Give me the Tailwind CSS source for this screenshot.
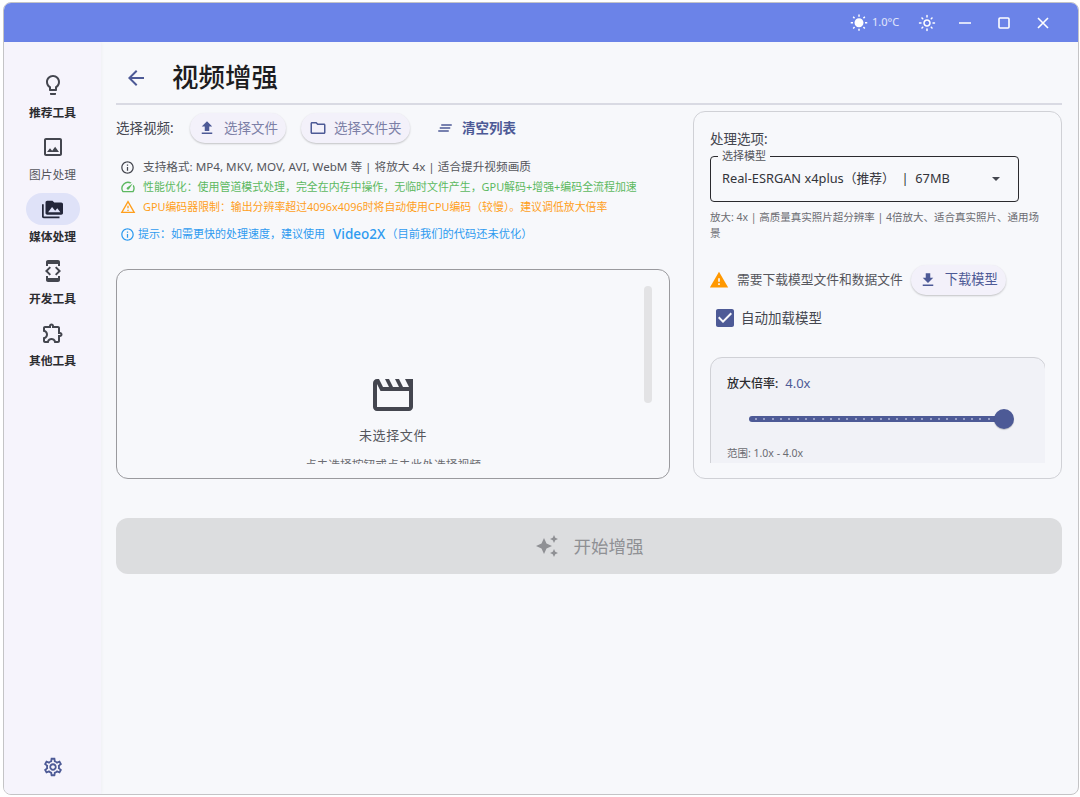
<!DOCTYPE html>
<html lang="zh-CN">
<head>
    <meta charset="UTF-8">
    <title>视频增强</title>
    <script src="https://cdn.jsdelivr.net/npm/@tailwindcss/browser@4"></script>
</head>
<body class="bg-white font-['Noto_Sans','Noto_Sans_CJK_SC',sans-serif]">
    <div class="ml-[3px] mt-[2px] w-[1076px] h-[793px] rounded-[8px] border border-[#c4c4c6] overflow-hidden flex flex-col bg-[#f7f8fb]">
        <!-- title bar -->
        <div class="h-[39px] shrink-0 bg-[#6b83e8] flex items-center justify-end text-white">
            <svg class="w-[18px] h-[18px]" viewBox="0 0 24 24" fill="currentColor"><path d="M6.76 4.84l-1.8-1.79-1.41 1.41 1.79 1.79 1.42-1.41zM4 10.5H1v2h3v-2zm9-9.95h-2V3.5h2V.55zm7.45 3.91l-1.41-1.41-1.79 1.79 1.41 1.41 1.79-1.79zm-3.21 13.7l1.79 1.8 1.41-1.41-1.8-1.79-1.4 1.4zM20 10.5v2h3v-2h-3zm-8-5c-3.31 0-6 2.69-6 6s2.69 6 6 6 6-2.69 6-6-2.69-6-6-6zm-1 16.95h2V19.5h-2v2.95zm-7.45-3.91l1.41 1.41 1.79-1.8-1.41-1.41-1.79 1.8z"/></svg>
            <span class="ml-[4px] text-[11px] text-white/80 w-[27px] whitespace-nowrap">1.0°C</span>
            <svg class="ml-[19px] w-[18px] h-[18px]" viewBox="0 0 24 24" fill="currentColor"><path d="M12 9c1.65 0 3 1.35 3 3s-1.35 3-3 3-3-1.35-3-3 1.35-3 3-3m0-2c-2.76 0-5 2.24-5 5s2.24 5 5 5 5-2.24 5-5-2.24-5-5-5zM2 13h2c.55 0 1-.45 1-1s-.45-1-1-1H2c-.55 0-1 .45-1 1s.45 1 1 1zm18 0h2c.55 0 1-.45 1-1s-.45-1-1-1h-2c-.55 0-1 .45-1 1s.45 1 1 1zM11 2v2c0 .55.45 1 1 1s1-.45 1-1V2c0-.55-.45-1-1-1s-1 .45-1 1zm0 18v2c0 .55.45 1 1 1s1-.45 1-1v-2c0-.55-.45-1-1-1s-1 .45-1 1zM5.99 4.58c-.39-.39-1.03-.39-1.41 0-.39.39-.39 1.03 0 1.41l1.06 1.06c.39.39 1.03.39 1.41 0s.39-1.03 0-1.41L5.99 4.58zm12.37 12.37c-.39-.39-1.03-.39-1.41 0-.39.39-.39 1.03 0 1.41l1.06 1.06c.39.39 1.03.39 1.41 0 .39-.39.39-1.03 0-1.41l-1.06-1.06zm1.06-10.96c.39-.39.39-1.03 0-1.41-.39-.39-1.03-.39-1.41 0l-1.06 1.06c-.39.39-.39 1.03 0 1.41s1.03.39 1.41 0l1.06-1.06zM7.05 18.36c.39-.39.39-1.03 0-1.41-.39-.39-1.03-.39-1.41 0l-1.06 1.06c-.39.39-.39 1.03 0 1.41s1.03.39 1.41 0l1.06-1.06z"/></svg>
            <svg class="ml-[22px] w-[14px] h-[14px]" viewBox="0 0 14 14" fill="none" stroke="currentColor" stroke-width="1.6"><path d="M1 7h12"/></svg>
            <svg class="ml-[25px] w-[14px] h-[14px]" viewBox="0 0 14 14" fill="none" stroke="currentColor" stroke-width="1.6"><rect x="2" y="2" width="10" height="10" rx="1"/></svg>
            <svg class="ml-[25px] mr-[28px] w-[14px] h-[14px]" viewBox="0 0 14 14" fill="none" stroke="currentColor" stroke-width="1.6"><path d="M2 2l10 10M12 2L2 12"/></svg>
        </div>

        <div class="flex flex-1 min-h-0">
            <!-- nav rail -->
            <nav class="w-[97px] shrink-0 bg-[#f6f4fc] shadow-[1px_0_3px_rgba(0,0,0,0.03)] flex flex-col items-center pt-[27px] gap-[11px] text-[#2c2c30]">
                <a class="flex flex-col items-center w-full">
                    <div class="w-[54px] h-[32px] rounded-full flex items-center justify-center">
                        <svg class="w-6 h-6" viewBox="0 0 24 24" fill="#44464f"><path d="M9 21c0 .55.45 1 1 1h4c.55 0 1-.45 1-1v-1H9v1zm3-19C8.14 2 5 5.14 5 9c0 2.38 1.19 4.47 3 5.74V17c0 .55.45 1 1 1h6c.55 0 1-.45 1-1v-2.26c1.81-1.27 3-3.36 3-5.74 0-3.86-3.14-7-7-7zm2.85 11.1l-.85.6V16h-4v-2.3l-.85-.6C7.8 12.16 7 10.63 7 9c0-2.76 2.24-5 5-5s5 2.24 5 5c0 1.63-.8 3.16-2.15 4.1z"/></svg>
                    </div>
                    <span class="mt-[3px] h-4 leading-4 text-[11.75px] font-bold">推荐工具</span>
                </a>
                <a class="flex flex-col items-center w-full">
                    <div class="w-[54px] h-[32px] rounded-full flex items-center justify-center">
                        <svg class="w-6 h-6" viewBox="0 0 24 24" fill="#44464f"><path d="M19 5v14H5V5h14m0-2H5c-1.1 0-2 .9-2 2v14c0 1.1.9 2 2 2h14c1.1 0 2-.9 2-2V5c0-1.1-.9-2-2-2zm-4.86 8.86l-3 3.87L9 13.14 6 17h12l-3.86-5.14z"/></svg>
                    </div>
                    <span class="mt-[3px] h-4 leading-4 text-[11.75px] text-[#55565c]">图片处理</span>
                </a>
                <a class="flex flex-col items-center w-full">
                    <div class="w-[54px] h-[32px] rounded-full bg-[#dfe2f8] flex items-center justify-center">
                        <svg class="w-[21px] h-[21px]" viewBox="0 0 24 24" fill="#23263a"><path d="M2 6H0v5h.01L0 20c0 1.1.9 2 2 2h18v-2H2V6zm20-2h-8l-2-2H6c-1.1 0-1.99.9-1.99 2L4 16c0 1.1.9 2 2 2h16c1.1 0 2-.9 2-2V6c0-1.1-.9-2-2-2zM7 15l4.5-6 3.5 4.51 2.5-3.01L21 15H7z"/></svg>
                    </div>
                    <span class="mt-[3px] h-4 leading-4 text-[11.75px] font-bold">媒体处理</span>
                </a>
                <a class="flex flex-col items-center w-full">
                    <div class="w-[54px] h-[32px] rounded-full flex items-center justify-center">
                        <svg class="w-6 h-6" viewBox="0 0 24 24" fill="#44464f"><path d="M7 5h10v2h2V3c0-1.1-.9-1.99-2-1.99L7 1c-1.1 0-2 .9-2 2v4h2V5zm8.41 11.59L20 12l-4.59-4.59L14 8.83 17.17 12 14 15.17l1.41 1.42zM10 15.17L6.83 12 10 8.83 8.59 7.41 4 12l4.59 4.59L10 15.17zM17 19H7v-2H5v4c0 1.1.9 2 2 2h10c1.1 0 2-.9 2-2v-4h-2v2z"/></svg>
                    </div>
                    <span class="mt-[3px] h-4 leading-4 text-[11.75px] font-bold">开发工具</span>
                </a>
                <a class="flex flex-col items-center w-full">
                    <div class="w-[54px] h-[32px] rounded-full flex items-center justify-center">
                        <svg class="w-6 h-6" viewBox="0 0 24 24" fill="#44464f"><path d="M10.5 4.5c.28 0 .5.22.5.5v2h6v6h2c.28 0 .5.22.5.5s-.22.5-.5.5h-2v6h-2.12c-.68-1.75-2.39-3-4.38-3s-3.7 1.25-4.38 3H4v-2.12c1.75-.68 3-2.39 3-4.38 0-1.99-1.24-3.7-2.99-4.38L4 7h6V5c0-.28.22-.5.5-.5m0-2C9.12 2.5 8 3.62 8 5H4c-1.1 0-1.99.9-1.99 2v3.8h.29c1.49 0 2.7 1.21 2.7 2.7s-1.21 2.7-2.7 2.7H2V20c0 1.1.9 2 2 2h3.8v-.3c0-1.49 1.21-2.7 2.7-2.7s2.7 1.21 2.7 2.7v.3H17c1.1 0 2-.9 2-2v-4c1.38 0 2.5-1.12 2.5-2.5S20.38 11 19 11V7c0-1.1-.9-2-2-2h-4c0-1.38-1.12-2.5-2.5-2.5z"/></svg>
                    </div>
                    <span class="mt-[3px] h-4 leading-4 text-[11.75px] font-bold">其他工具</span>
                </a>
                <div class="mt-auto mb-[16px]">
                    <svg class="w-[22px] h-[22px]" viewBox="0 0 24 24" fill="#4d5a96"><path d="M19.43 12.98c.04-.32.07-.64.07-.98 0-.34-.03-.66-.07-.98l2.11-1.65c.19-.15.24-.42.12-.64l-2-3.46c-.09-.16-.26-.25-.44-.25-.06 0-.12.01-.17.03l-2.49 1c-.52-.4-1.08-.73-1.69-.98l-.38-2.65C14.46 2.18 14.25 2 14 2h-4c-.25 0-.46.18-.49.42l-.38 2.65c-.61.25-1.17.59-1.69.98l-2.49-1c-.06-.02-.12-.03-.18-.03-.17 0-.34.09-.43.25l-2 3.46c-.13.22-.07.49.12.64l2.11 1.65c-.04.32-.07.65-.07.98 0 .33.03.66.07.98l-2.11 1.65c-.19.15-.24.42-.12.64l2 3.46c.09.16.26.25.44.25.06 0 .12-.01.17-.03l2.49-1c.52.4 1.08.73 1.69.98l.38 2.65c.03.24.24.42.49.42h4c.25 0 .46-.18.49-.42l.38-2.65c.61-.25 1.17-.59 1.69-.98l2.49 1c.06.02.12.03.18.03.17 0 .34-.09.43-.25l2-3.46c.12-.22.07-.49-.12-.64l-2.11-1.65zm-1.98-1.71c.04.31.05.52.05.73 0 .21-.02.43-.05.73l-.14 1.13.89.7 1.08.84-.7 1.21-1.27-.51-1.04-.42-.9.68c-.43.32-.84.56-1.25.73l-1.06.43-.16 1.13-.2 1.35h-1.4l-.19-1.35-.16-1.13-1.06-.43c-.43-.18-.83-.41-1.23-.71l-.91-.7-1.06.43-1.27.51-.7-1.21 1.08-.84.89-.7-.14-1.13c-.03-.31-.05-.54-.05-.74s.02-.43.05-.73l.14-1.13-.89-.7-1.08-.84.7-1.21 1.27.51 1.04.42.9-.68c.43-.32.84-.56 1.25-.73l1.06-.43.16-1.13.2-1.35h1.39l.19 1.35.16 1.13 1.06.43c.43.18.83.41 1.23.71l.91.7 1.06-.43 1.27-.51.7 1.21-1.07.85-.89.7.14 1.13zM12 8c-2.21 0-4 1.79-4 4s1.79 4 4 4 4-1.79 4-4-1.79-4-4-4zm0 6c-1.1 0-2-.9-2-2s.9-2 2-2 2 .9 2 2-.9 2-2 2z"/></svg>
                </div>
            </nav>

            <!-- main -->
            <main class="flex-1 min-w-0 pl-[15px] pr-[16px]">
                <div class="h-[63px] pt-[10px] border-b-2 border-[#d9dae3] flex items-center">
                    <svg class="ml-[8px] w-6 h-6" viewBox="0 0 24 24" fill="#4d5a96"><path d="M20 11H7.83l5.59-5.59L12 4l-8 8 8 8 1.41-1.41L7.83 13H20v-2z"/></svg>
                    <h1 class="ml-[24px] text-[26.5px] font-medium text-[#1c1c20] leading-none">视频增强</h1>
                </div>

                <div class="flex gap-[23px] mt-[5px]">
                    <!-- left column -->
                    <div class="w-[554px] shrink-0">
                        <div class="flex items-center mt-[3px] h-[30px]">
                            <span class="text-[13.5px] text-[#44464f] w-[74px]">选择视频:</span>
                            <button class="h-[30px] w-[96px] rounded-full bg-[#f3f1fa] shadow-[0_1px_2px_rgba(0,0,0,0.22)] flex items-center pl-[8px] text-[13.5px] text-[#7c7fa6]">
                                <svg class="w-[18px] h-[18px]" viewBox="0 0 24 24" fill="#4d5a96"><path d="M9 16h6v-6h4l-7-7-7 7h4v6zm-4 2h14v2H5v-2z"/></svg>
                                <span class="ml-[8px]">选择文件</span>
                            </button>
                            <button class="ml-[15px] h-[30px] w-[109px] rounded-full bg-[#f3f1fa] shadow-[0_1px_2px_rgba(0,0,0,0.22)] flex items-center pl-[8px] text-[13.5px] text-[#7c7fa6]">
                                <svg class="w-[18px] h-[18px]" viewBox="0 0 24 24" fill="#4d5a96"><path d="M9.17 6l2 2H20v10H4V6h5.17M10 4H4c-1.1 0-1.99.9-1.99 2L2 18c0 1.1.9 2 2 2h16c1.1 0 2-.9 2-2V8c0-1.1-.9-2-2-2h-8l-2-2z"/></svg>
                                <span class="ml-[7px]">选择文件夹</span>
                            </button>
                            <button class="ml-[26px] flex items-center text-[13.5px] font-bold text-[#4d5a96]">
                                <svg class="w-[18px] h-[18px]" viewBox="0 0 24 24" fill="#4d5a96"><path d="M5 13h14v-2H5v2zm-2 4h14v-2H3v2zM7 7v2h14V7H7z"/></svg>
                                <span class="ml-[8px]">清空列表</span>
                            </button>
                        </div>

                        <div class="mt-[14px] pl-[4px] text-[11px] leading-[20px]">
                            <div class="flex items-center text-[#55565c] text-[11.65px]">
                                <svg class="w-[15px] h-[15px]" viewBox="0 0 24 24" fill="#44464f"><path d="M11 7h2v2h-2zm0 4h2v6h-2zm1-9C6.48 2 2 6.48 2 12s4.48 10 10 10 10-4.48 10-10S17.52 2 12 2zm0 18c-4.41 0-8-3.59-8-8s3.59-8 8-8 8 3.59 8 8-3.59 8-8 8z"/></svg>
                                <span class="ml-[8px]">支持格式: MP4, MKV, MOV, AVI, WebM 等 | 将放大 4x | 适合提升视频画质</span>
                            </div>
                            <div class="flex items-center text-[#5cb860] text-[10.93px]">
                                <svg class="w-4 h-4" viewBox="0 0 24 24" fill="#5cb860"><path d="M20.38 8.57l-1.23 1.85a8 8 0 0 1-.22 7.58H5.07A8 8 0 0 1 15.58 6.85l1.85-1.23A10 10 0 0 0 3.35 19a2 2 0 0 0 1.72 1h13.85a2 2 0 0 0 1.74-1 10 10 0 0 0-.27-10.44zm-9.79 6.84a2 2 0 0 0 2.83 0l5.66-8.49-8.49 5.66a2 2 0 0 0 0 2.83z"/></svg>
                                <span class="ml-[7px]">性能优化：使用管道模式处理，完全在内存中操作，无临时文件产生，GPU解码+增强+编码全流程加速</span>
                            </div>
                            <div class="flex items-center text-[#ff9f1c] text-[10.9px]">
                                <svg class="w-4 h-4" viewBox="0 0 24 24" fill="#ff9f1c"><path d="M12 5.99L19.53 19H4.47L12 5.99M12 2L1 21h22L12 2zm1 14h-2v2h2v-2zm0-6h-2v4h2v-4z"/></svg>
                                <span class="ml-[7px]">GPU编码器限制：输出分辨率超过4096x4096时将自动使用CPU编码（较慢）。建议调低放大倍率</span>
                            </div>
                            <div class="flex items-center text-[#2f9bf0] mt-[7px] h-[20px]">
                                <svg class="w-[15px] h-[15px]" viewBox="0 0 24 24" fill="#2f9bf0"><path d="M11 7h2v2h-2zm0 4h2v6h-2zm1-9C6.48 2 2 6.48 2 12s4.48 10 10 10 10-4.48 10-10S17.52 2 12 2zm0 18c-4.41 0-8-3.59-8-8s3.59-8 8-8 8 3.59 8 8-3.59 8-8 8z"/></svg>
                                <span class="ml-[3px]">提示：如需更快的处理速度，建议使用</span>
                                <span class="ml-[8px] text-[13.5px] font-medium">Video2X</span>
                                <span class="ml-[1px] text-[11.25px]">（目前我们的代码还未优化）</span>
                            </div>
                        </div>

                        <!-- drop zone, last line is cut by its scroll area as in the app -->
                        <div class="relative mt-[25px] h-[210px] rounded-[12px] border border-[#9a9a9e]">
                            <div class="absolute right-[17px] top-[16px] w-2 h-[117px] rounded-full bg-[#e3e3e5]"></div>
                            <div class="h-[194px] overflow-hidden flex flex-col items-center">
                                <svg class="mt-[101px] w-12 h-12 shrink-0" viewBox="0 0 24 24" fill="#44464f"><path d="M4 6.47L5.76 10H20v8H4V6.47M22 4h-4l2 4h-3l-2-4h-2l2 4h-3l-2-4H8l2 4H7L5 4H4c-1.1 0-1.99.9-1.99 2L2 18c0 1.1.9 2 2 2h16c1.1 0 2-.9 2-2V4z"/></svg>
                                <p class="mt-[6px] text-[13px] tracking-[0.6px] text-[#55565c] shrink-0 leading-5">未选择文件</p>
                                <p class="mt-[11px] text-[11.75px] text-[#6b6c72] shrink-0 leading-4">点击选择按钮或点击此处选择视频</p>
                            </div>
                        </div>
                    </div>

                    <!-- right column -->
                    <div class="w-[369px] h-[368px] mt-[1px] shrink-0 rounded-[12px] border border-[#d0d1d6] pl-[16px] pr-[16px] pt-[17px] overflow-hidden">
                        <div class="h-[334px] overflow-hidden">
                            <p class="text-[13.5px] text-[#44464f] leading-[20px]">处理选项:</p>
                            <div class="relative mt-[7px] w-[309px] h-[46px] rounded-[4px] border border-[#2a2a2e] flex items-center pl-[11px] pr-[18px] justify-between">
                                <span class="absolute left-[7px] -top-[8px] px-[4px] bg-[#f7f8fb] text-[11px] leading-[14px] text-[#55565c]">选择模型</span>
                                <span class="text-[12.8px] text-[#33343a] whitespace-pre">Real-ESRGAN x4plus（推荐）  |  67MB</span>
                                <svg class="w-2 h-1" viewBox="0 0 10 5" fill="#44464f"><path d="M0 0l5 5 5-5z"/></svg>
                            </div>
                            <p class="mt-[7px] text-[10.5px] leading-[16px] text-[#6b6c72] w-[332px]">放大: 4x | 高质量真实照片超分辨率 | 4倍放大、适合真实照片、通用场景</p>
                            <div class="mt-[24px] flex items-center h-[30px]">
                                <svg class="w-[20px] h-[20px] -ml-[1px]" viewBox="0 0 24 24" fill="#ff9800"><path d="M1 21h22L12 2 1 21zm12-3h-2v-2h2v2zm0-4h-2v-4h2v4z"/></svg>
                                <span class="ml-[8px] text-[12.75px] text-[#55565c] whitespace-nowrap">需要下载模型文件和数据文件</span>
                                <button class="ml-[8px] h-[30px] w-[95px] shrink-0 rounded-full bg-[#f3f1fa] shadow-[0_1px_2px_rgba(0,0,0,0.22)] flex items-center pl-[8px] text-[13.25px] text-[#4d5a96]">
                                    <svg class="w-[18px] h-[18px]" viewBox="0 0 24 24" fill="#4d5a96"><path d="M19 9h-4V3H9v6H5l7 7 7-7zM5 18v2h14v-2H5z"/></svg>
                                    <span class="ml-[8px]">下载模型</span>
                                </button>
                            </div>
                            <div class="mt-[13px] ml-[6px] flex items-center h-[20px]">
                                <svg class="w-[18px] h-[18px]" viewBox="3 3 18 18" fill="#4d5a96"><path d="M19 3H5c-1.11 0-2 .9-2 2v14c0 1.1.89 2 2 2h14c1.11 0 2-.9 2-2V5c0-1.1-.89-2-2-2zm-9 14l-5-5 1.41-1.41L10 14.17l7.59-7.59L19 8l-9 9z"/></svg>
                                <span class="ml-[7px] text-[13.5px] text-[#44464f]">自动加载模型</span>
                            </div>
                            <!-- scale panel, cut off by the scroll area -->
                            <div class="mt-[29px] w-[336px] h-[140px] rounded-[12px] border border-[#d0d1d6] bg-[#f1f2f7] px-[16px] pt-[15px]">
                                <p class="text-[12px] leading-[20px] text-[#2c2c30] font-medium">放大倍率:<span class="ml-[7px] text-[13px] text-[#4d5a96] font-normal">4.0x</span></p>
                                <div class="relative mt-[22px] ml-[22px] w-[255px] h-[6px] rounded-full bg-[#4d5a96] flex items-center justify-between pl-[6px] pr-[14px]">
                                    <i class="w-[2px] h-[2px] rounded-full bg-[#aeb4d6]"></i><i class="w-[2px] h-[2px] rounded-full bg-[#aeb4d6]"></i><i class="w-[2px] h-[2px] rounded-full bg-[#aeb4d6]"></i><i class="w-[2px] h-[2px] rounded-full bg-[#aeb4d6]"></i><i class="w-[2px] h-[2px] rounded-full bg-[#aeb4d6]"></i><i class="w-[2px] h-[2px] rounded-full bg-[#aeb4d6]"></i><i class="w-[2px] h-[2px] rounded-full bg-[#aeb4d6]"></i><i class="w-[2px] h-[2px] rounded-full bg-[#aeb4d6]"></i><i class="w-[2px] h-[2px] rounded-full bg-[#aeb4d6]"></i><i class="w-[2px] h-[2px] rounded-full bg-[#aeb4d6]"></i><i class="w-[2px] h-[2px] rounded-full bg-[#aeb4d6]"></i><i class="w-[2px] h-[2px] rounded-full bg-[#aeb4d6]"></i><i class="w-[2px] h-[2px] rounded-full bg-[#aeb4d6]"></i><i class="w-[2px] h-[2px] rounded-full bg-[#aeb4d6]"></i><i class="w-[2px] h-[2px] rounded-full bg-[#aeb4d6]"></i><i class="w-[2px] h-[2px] rounded-full bg-[#aeb4d6]"></i><i class="w-[2px] h-[2px] rounded-full bg-[#aeb4d6]"></i><i class="w-[2px] h-[2px] rounded-full bg-[#aeb4d6]"></i><i class="w-[2px] h-[2px] rounded-full bg-[#aeb4d6]"></i><i class="w-[2px] h-[2px] rounded-full bg-[#aeb4d6]"></i><i class="w-[2px] h-[2px] rounded-full bg-[#aeb4d6]"></i><i class="w-[2px] h-[2px] rounded-full bg-[#aeb4d6]"></i><i class="w-[2px] h-[2px] rounded-full bg-[#aeb4d6]"></i><i class="w-[2px] h-[2px] rounded-full bg-[#aeb4d6]"></i><i class="w-[2px] h-[2px] rounded-full bg-[#aeb4d6]"></i><i class="w-[2px] h-[2px] rounded-full bg-[#aeb4d6]"></i><i class="w-[2px] h-[2px] rounded-full bg-[#aeb4d6]"></i><i class="w-[2px] h-[2px] rounded-full bg-[#aeb4d6]"></i><i class="w-[2px] h-[2px] rounded-full bg-[#aeb4d6]"></i>
                                    <div class="absolute -right-[10px] top-1/2 -translate-y-1/2 w-5 h-5 rounded-full bg-[#4d5a96] shadow-[0_1px_1px_rgba(0,0,0,0.2)]"></div>
                                </div>
                                <p class="mt-[23px] text-[10.5px] leading-[16px] text-[#6b6c72]">范围: 1.0x - 4.0x</p>
                            </div>
                        </div>
                    </div>
                </div>

                <!-- start button -->
                <button class="mt-[39px] w-full h-[56px] rounded-[12px] bg-[#dcdddf] flex items-center justify-center text-[#8f9094] text-[17.5px]">
                    <svg class="w-6 h-6" viewBox="0 0 24 24" fill="#8f9094"><path d="M19 9l1.25-2.75L23 5l-2.75-1.25L19 1l-1.25 2.75L15 5l2.75 1.25L19 9zm-7.5.5L9 4 6.5 9.5 1 12l5.5 2.5L9 20l2.5-5.5L17 12l-5.5-2.5zM19 15l-1.25 2.75L15 19l2.75 1.25L19 23l1.25-2.75L23 19l-2.75-1.25L19 15z"/></svg>
                    <span class="ml-[15px] mt-[1px]">开始增强</span>
                </button>
            </main>
        </div>
    </div>
</body>
</html>
